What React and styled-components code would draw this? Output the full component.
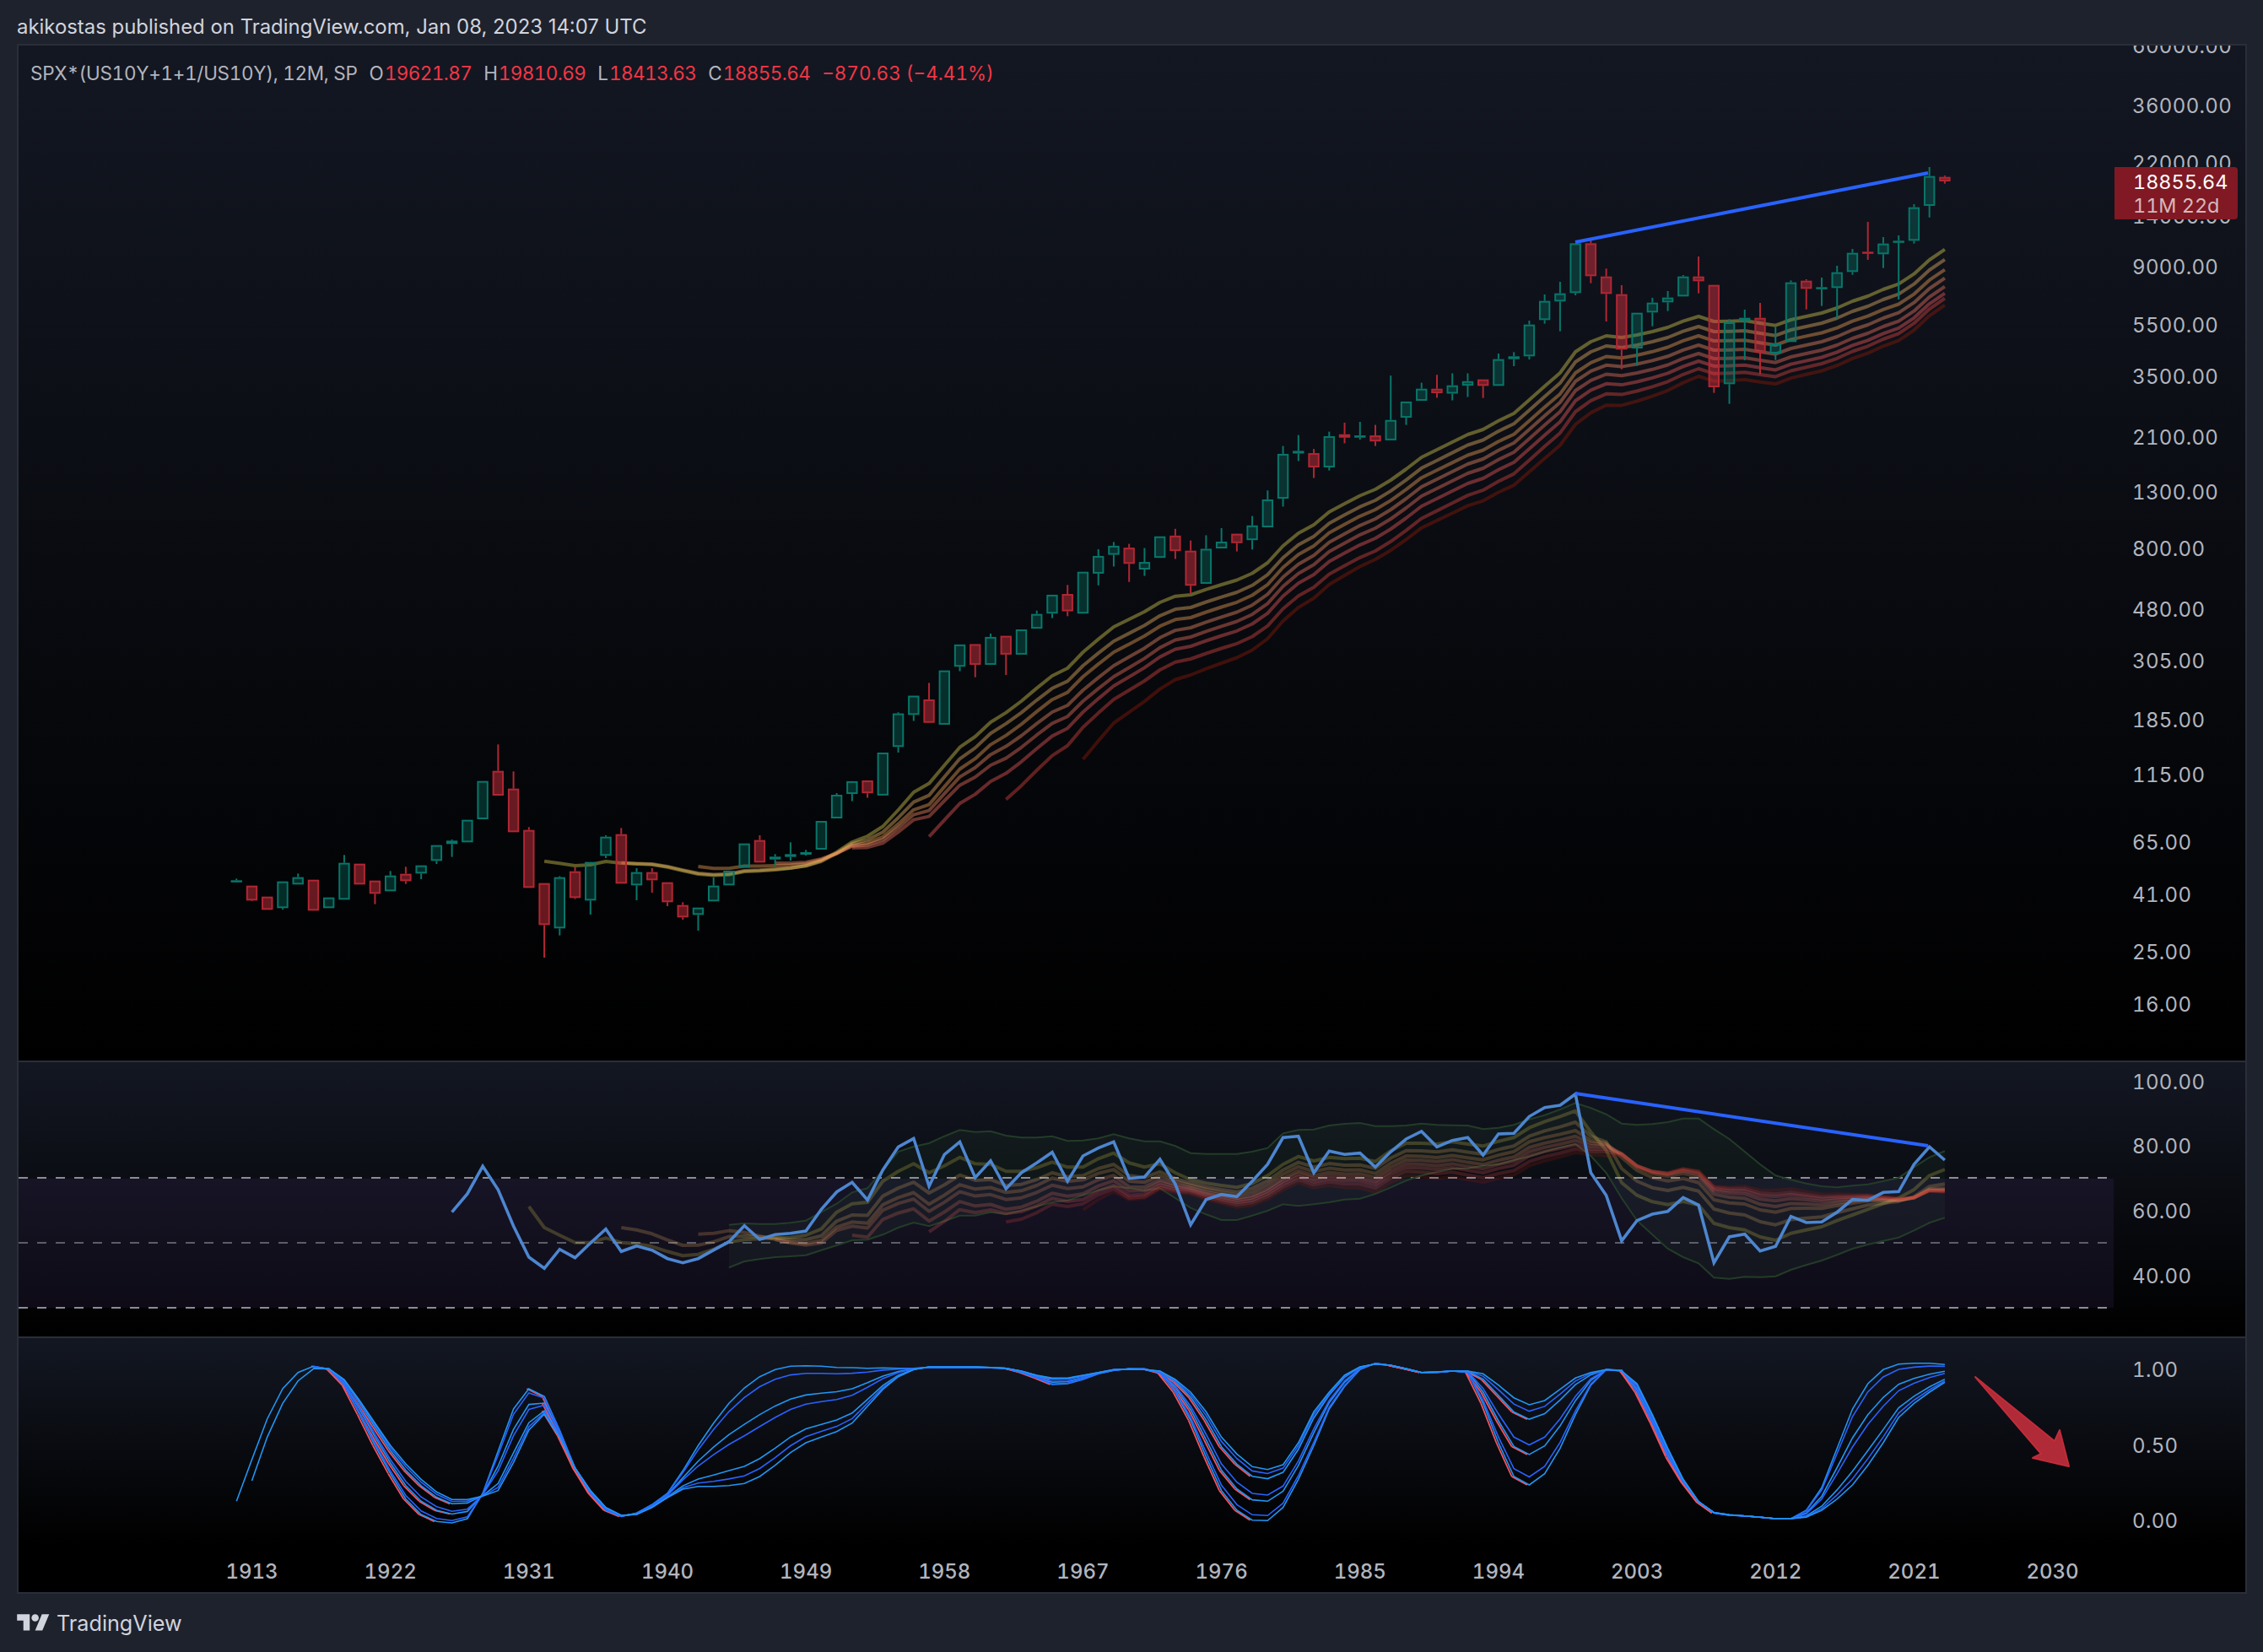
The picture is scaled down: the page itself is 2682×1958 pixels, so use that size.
import React from 'react';
import styled, { createGlobalStyle } from 'styled-components';

const GlobalStyle = createGlobalStyle`
  html, body {
    margin: 0;
    padding: 0;
    background: #1e222d;
  }
`;

const FONT = 'Inter, "Noto Sans", "Liberation Sans", sans-serif';

const Page = styled.div`
  display: flex;
  flex-direction: column;
  width: 2682px;
  height: 1958px;
  overflow: hidden;
  background: #1e222d;
  font-family: ${FONT};
`;

const Header = styled.div`
  display: flex;
  align-items: center;
  height: 42px;
  padding: 10px 0 0 20px;
  font-size: 23.9px;
  color: #d1d4dc;
`;

const Frame = styled.div`
  display: flex;
  flex-direction: column;
  gap: 2px;
  margin: 0 19px 0 20px;
  border: 2px solid #2a2e39;
  background: #2a2e39;
`;

const Pane = styled.div`
  position: relative;
  height: ${(p) => p.$height}px;
  overflow: hidden;
  background: linear-gradient(180deg, #131722 0%, #000 ${(p) => p.$fade || 100}%);
`;

const PaneSvg = styled.svg`
  display: block;
  width: 100%;
  height: 100%;
`;

const AxisLabel = styled.text`
  font-family: ${FONT};
  font-size: 24px;
  font-feature-settings: 'tnum';
  fill: #b2b5be;
  letter-spacing: 0.35px;
`;

const TimeLabel = styled(AxisLabel)`
  font-weight: 500;
  letter-spacing: 0;
  text-anchor: middle;
`;

const Legend = styled.div`
  position: absolute;
  left: 14px;
  top: 20px;
  display: flex;
  gap: 14px;
  font-size: 22.5px;
  font-feature-settings: 'tnum';
  line-height: 26px;
  color: #b2b5be;
  white-space: nowrap;
`;

const LegendTitle = styled.span`
  letter-spacing: -0.3px;
`;

const LegendPair = styled.span`
  display: inline-flex;
  gap: 1px;
`;

const LegendValue = styled.span`
  color: #f23645;
  letter-spacing: -0.6px;
`;

const LegendChange = styled.span`
  color: #f23645;
`;

const PriceBadge = styled.div`
  position: absolute;
  left: 2484px;
  top: 144px;
  display: flex;
  flex-direction: column;
  justify-content: center;
  box-sizing: border-box;
  width: 146px;
  height: 62px;
  padding: 2px 0 0 22px;
  border-radius: 0 4px 4px 0;
  background: #801923;
  font-size: 23.4px;
  font-feature-settings: 'tnum';
  line-height: 28px;
  color: #fff;
`;

const BadgeSub = styled.span`
  color: rgba(255, 255, 255, 0.7);
`;

const Footer = styled.div`
  display: flex;
  align-items: center;
  gap: 8px;
  height: 69px;
  padding-left: 20px;
  font-size: 25.2px;
  color: #d1d4dc;
`;

const LogoMark = styled.svg`
  display: block;
  width: 39px;
  height: 30px;
  fill: #d1d4dc;
`;

// horizontal position of a yearly bar, in page pixels
const xOf = (year) => 298.5 + 18.24 * (year - 1913);
const pts = (list) => list.map(([x, y]) => `${x.toFixed(1)},${y.toFixed(1)}`).join(' ');

// candles: colour, body top, body bottom, wick top, wick bottom
const crop = (rows, y0, k) =>
  rows.map(([c, a, b, t, w]) => [c, y0 + a / k, y0 + b / k, y0 + (t ?? a) / k, y0 + (w ?? b) / k]);

const candles = [
  ...crop(
    [
      ['g', 550, 556, 544, 556], ['r', 569, 622, 569, 624], ['r', 608, 655], ['g', 554, 649, 554, 654],
      ['g', 539, 565, 526], ['r', 548, 658], ['g', 611, 649], ['g', 488, 619, 460], ['r', 491, 565],
      ['r', 551, 598, 551, 635], ['g', 533, 589, 517], ['r', 527, 553, 502, 563], ['g', 497, 526, 497, 546],
      ['g', 425, 481, 425, 492], ['g', 409, 421, 405, 467], ['g', 335, 415], ['g', 197, 333],
      ['r', 161, 249, 67], ['r', 224, 379, 163], ['r', 371, 577, 361], ['r', 560, 709, 560, 825],
      ['g', 539, 721, 535, 746], ['r', 518, 613, 503, 617], ['g', 485, 622, 485, 672], ['g', 395, 463, 390, 471],
      ['r', 386, 562, 364], ['g', 521, 568, 507, 621], ['r', 521, 550, 507, 594], ['r', 557, 628, 557, 642],
      ['r', 638, 682, 628, 690], ['g', 647, 673, 647, 729], ['g', 569, 625, 540], ['g', 516, 568],
      ['g', 419, 505], ['r', 407, 487, 390], ['g', 466, 476, 457, 500], ['g', 457, 467, 415, 480],
      ['g', 450, 459, 442, 462], ['g', 339, 441], ['g', 246, 330, 240],
    ],
    860,
    3
  ),
  ...crop(
    [
      ['g', 1402, 1436, 1402, 1455], ['r', 1400, 1434, 1400, 1446], ['g', 1326, 1440], ['g', 1222, 1311, 1219, 1326],
      ['g', 1175, 1226, 1175, 1242], ['r', 1185, 1247, 1141], ['g', 1108, 1252], ['g', 1039, 1098, 1039, 1110],
      ['r', 1038, 1093, 1038, 1126], ['g', 1019, 1093, 1010], ['r', 1016, 1066, 1016, 1120], ['g', 999, 1066],
      ['g', 958, 997, 949], ['g', 907, 957, 907, 969], ['r', 905, 951, 881, 964], ['g', 846, 957],
      ['g', 804, 851, 786, 882], ['g', 777, 801, 767, 832], ['r', 782, 825, 772, 873], ['g', 820, 840, 783, 857],
      ['g', 752, 809], ['r', 750, 791, 732, 812], ['r', 790, 883, 763, 905], ['g', 785, 878, 749],
      ['g', 766, 784, 730], ['r', 745, 770, 745, 792], ['g', 723, 762, 698, 787], ['g', 654, 728, 630],
      ['g', 533, 652, 512, 673], ['g', 525, 532, 483, 552], ['r', 531, 569, 520, 597], ['g', 486, 569, 474, 577],
      ['r', 481, 490, 450, 505], ['g', 484, 490, 448, 495], ['r', 484, 500, 456, 512], ['g', 443, 497, 325],
      ['g', 394, 437, 394, 456], ['g', 360, 392, 344], ['r', 360, 372, 323, 384], ['g', 351, 373, 319, 391],
      ['g', 340, 352, 319, 382],
    ],
    300,
    2.24
  ),
  ...crop(
    [
      ['r', 809, 832, 809, 875], ['g', 737, 832, 717], ['g', 727, 737, 712, 762], ['g', 614, 727, 600, 738],
      ['g', 530, 598, 507, 611], ['g', 503, 532, 462, 638], ['g', 325, 502, 325, 510], ['r', 325, 442, 307, 467],
      ['r', 443, 505, 415, 603], ['r', 506, 703, 474, 773], ['g', 572, 699, 572, 760], ['g', 536, 571, 519, 620],
      ['g', 518, 535, 495, 566], ['g', 443, 514, 438], ['r', 443, 460, 372, 503], ['r', 473, 837, 473, 857],
      ['g', 606, 826, 595, 896], ['g', 590, 601, 561, 741], ['r', 590, 714, 537, 791], ['g', 681, 717, 623, 740],
      ['g', 464, 676, 457], ['r', 458, 487, 453, 560], ['g', 481, 488, 447, 548], ['g', 428, 484, 405, 593],
      ['g', 359, 427, 345, 437], ['r', 355, 362, 249, 384], ['g', 326, 364, 303, 413], ['g', 316, 323, 297, 525],
      ['g', 197, 316, 186, 326], ['g', 86, 192, 54, 233], ['r', 89, 105, 84, 113],
    ],
    180,
    3
  ),
];

const RIBBON = ['231,218,84', '251,191,104', '255,169,91', '255,147,104', '255,120,100', '255,96,96', '233,73,67', '149,27,7'];

// offset of every ribbon line from the first one, at some years
const offsetAt = (keys, year, i) => {
  const years = Object.keys(keys).map(Number);
  let from = years[0];
  let to = years[years.length - 1];
  years.forEach((y) => {
    if (y <= year) from = y;
  });
  for (let n = years.length - 1; n >= 0; n -= 1) {
    if (years[n] >= year) to = years[n];
  }
  if (from === to) return keys[from][i];
  const t = (year - from) / (to - from);
  return keys[from][i] + (keys[to][i] - keys[from][i]) * t;
};

const ribbonLines = (firstYear, line, keys, starts, toPx) =>
  starts.map((start, i) =>
    line
      .map((y, n) => [firstYear + n, y])
      .filter(([year]) => year >= start)
      .map(([year, y]) => [xOf(year), toPx(y + offsetAt(keys, year, i))])
  );

const PRICE_TOP = [
  1020.7, 1023.3, 1026, 1025, 1021, 1023, 1024, 1024.7, 1027.7, 1032, 1036, 1037.5, 1036.7, 1033, 1032.3, 1031, 1029, 1026,
  1020, 1010, 998, 991, 979.5, 960, 939, 928.6, 907, 885.7, 873, 856, 844.6, 831, 815.6, 801, 792, 773, 757.6, 743, 734, 725,
  714, 706.7, 705, 698.7, 693, 687.5, 679.5, 667, 647, 632, 622, 606.7, 597, 587.5, 580, 569, 556, 542, 533, 524, 515, 509,
  498.7, 490, 474, 457.7, 442, 417, 405, 398, 400, 397, 393, 388, 380.7, 375, 381, 380.7, 380, 383, 385.7, 379, 375, 371, 365,
  357, 351, 343, 336.7, 324.7, 308, 295.7,
];

const PRICE_KEYS = {
  1932: [0, 0, 0, 0, 0, 0, 0, 0],
  1942: [0, -1, -9, -9, -9, -9, -9, -9],
  1947: [0, -1, -5, -8, -8, -8, -8, -8],
  1950: [0, 1, -1, -2, 0, 0, 0, 0],
  1952: [0, 2, 4, 5, 7, 30, 60, 80],
  1957: [0, 14, 25, 32, 39, 63, 85, 100],
  1962: [0, 13, 27, 40, 54, 72, 103, 115],
  1967: [0, 16, 29, 45, 58, 71, 89, 127],
  1969: [0, 17, 30, 46, 59, 70, 86, 114],
  1974: [0, 15, 27, 39, 50, 61, 76, 95],
  1986: [0, 13, 24, 35, 46, 58, 73, 83],
  1999: [0, 12, 25, 35, 46, 58, 71, 86],
  2007: [0, 12, 23, 34, 44, 53, 62, 71],
  2023: [0, 12, 24, 34, 44, 52, 58, 66],
};

const PRICE_STARTS = [1932, 1937, 1942, 1947, 1952, 1957, 1962, 1967];

const PRICE_LABELS = [
  ['60000.00', 54], ['36000.00', 125], ['22000.00', 193], ['14000.00', 256], ['9000.00', 316], ['5500.00', 385],
  ['3500.00', 446], ['2100.00', 518], ['1300.00', 583], ['800.00', 650], ['480.00', 722], ['305.00', 783],
  ['185.00', 853], ['115.00', 918], ['65.00', 998], ['41.00', 1060], ['25.00', 1128], ['16.00', 1190],
];

const rsiY = (v) => 1240 + v / 3;

const RSI_LINE = [
  590, 525, 427, 510, 640, 750, 790, 722, 752, 700, 650, 730, 710, 725, 755, 770, 755, 725, 695, 638, 687, 670, 665, 657, 580,
  518, 484, 547, 440, 358, 328, 498, 385, 340, 467, 407, 507, 450, 415, 377, 480, 390, 362, 340, 470, 465, 402, 490, 635, 545,
  527, 535, 480, 420, 325, 320, 450, 373, 385, 380, 430, 375, 330, 303, 358, 335, 325, 387, 312, 310, 250, 218, 210, 170, 450,
  530, 692, 620, 597, 587, 538, 565, 770, 678, 668, 728, 712, 605, 627, 625, 590, 545, 548, 520, 517, 420, 358, 405,
];

const RSI_TOP = [
  570, 645, 672, 698, 698, 682, 698, 702, 712, 730, 745, 740, 722, 697, 688, 685, 682, 680, 672, 650, 590, 560, 555, 480, 445,
  418, 450, 425, 395, 418, 420, 445, 445, 432, 412, 430, 430, 400, 380, 415, 430, 418, 450, 475, 487, 495, 502, 488, 460, 420,
  392, 408, 395, 400, 398, 410, 372, 345, 345, 348, 340, 348, 355, 338, 325, 290, 268, 250, 230, 305, 370, 485, 530, 553, 563,
  552, 565, 630, 645, 653, 678, 690, 665, 653, 642, 620, 600, 580, 560, 540, 510, 460, 438,
];

const RSI_KEYS = {
  1931: [0, 0, 0, 0, 0, 0, 0, 0],
  1937: [0, -53, -53, -53, -53, -53, -53, -53],
  1942: [0, -33, -72, -72, -72, -72, -72, -72],
  1947: [0, 0, 5, 5, 5, 5, 5, 5],
  1952: [0, 40, 65, 80, 112, 112, 112, 112],
  1957: [0, 72, 112, 137, 172, 210, 210, 210],
  1962: [0, 50, 75, 100, 135, 150, 180, 180],
  1967: [0, 30, 45, 70, 95, 115, 130, 152],
  1970: [0, 45, 65, 85, 100, 115, 125, 130],
  1974: [0, 12, 20, 28, 33, 38, 44, 50],
  1980: [0, 20, 35, 50, 60, 70, 80, 90],
  1990: [0, 28, 48, 62, 77, 90, 105, 122],
  1996: [0, 30, 50, 70, 85, 100, 120, 135],
  1999: [0, 40, 70, 90, 105, 120, 135, 148],
  2000: [0, 15, 30, 40, 50, 60, 70, 80],
  2001: [0, -30, -25, -20, -15, -5, 5, 20],
  2002: [0, -50, -90, -100, -103, -103, -100, -95],
  2007: [0, -50, -80, -100, -110, -115, -120, -120],
  2012: [0, -55, -100, -120, -140, -155, -165, -178],
  2018: [0, -15, -30, -35, -40, -45, -48, -52],
  2023: [0, 52, 67, 72, 75, 77, 79, 82],
};

const RSI_STARTS = [1931, 1937, 1942, 1947, 1952, 1957, 1962, 1967];

const BAND_UPPER = [
  635, 630, 632, 632, 628, 620, 590, 560, 520, 505, 440, 375, 357, 345, 320, 298, 305, 302, 318, 325, 325, 320, 337, 335, 328,
  313, 328, 338, 338, 355, 380, 383, 383, 383, 375, 362, 310, 298, 296, 282, 276, 273, 284, 284, 282, 275, 280, 281, 282, 295,
  290, 280, 260, 245, 225, 202, 220, 242, 275, 280, 277, 270, 257, 257, 295, 330, 375, 420, 460, 475, 488, 498, 502, 496, 491,
  480, 468, 430, 395, 373,
];

const BAND_LOWER = [
  787, 765, 757, 750, 747, 743, 725, 708, 690, 688, 670, 645, 627, 640, 622, 602, 602, 590, 597, 585, 570, 555, 548, 530, 512,
  498, 505, 513, 505, 540, 575, 598, 618, 618, 602, 585, 562, 568, 562, 555, 545, 542, 525, 502, 478, 460, 447, 436, 434, 425,
  420, 405, 392, 375, 360, 348, 390, 450, 540, 620, 670, 720, 750, 772, 823, 827, 820, 821, 818, 795, 778, 762, 742, 720, 705,
  692, 680, 655, 628, 610,
];

const STOCH_FAST = [
  628, 480, 335, 228, 170, 148, 158, 215, 320, 430, 530, 620, 675, 700, 705, 690, 600, 450, 300, 228, 255, 375, 510, 600, 660,
  682, 670, 640, 600, 520, 430, 350, 280, 225, 185, 160, 148, 146, 148, 152, 153, 155, 154, 155, 155, 153, 153, 153, 153, 154,
  155, 170, 190, 213, 210, 195, 175, 163, 157, 157, 172, 240, 340, 470, 590, 660, 695, 697, 650, 550, 430, 300, 220, 160, 137,
  145, 157, 170, 170, 165, 170, 280, 420, 540, 570, 530, 440, 320, 215, 160, 162, 240, 350, 470, 560, 630, 670, 678, 680, 685,
  690, 690, 660, 580, 440, 300, 210, 160, 140, 137, 137, 142,
];

const STOCH_SLOW = [
  628, 555, 400, 280, 200, 157, 157, 195, 270, 350, 430, 495, 550, 595, 622, 622, 610, 590, 490, 375, 318, 400, 510, 590, 650,
  678, 675, 650, 615, 585, 575, 575, 572, 565, 540, 500, 455, 420, 400, 380, 350, 290, 230, 185, 160, 150, 150, 150, 150, 152,
  155, 165, 180, 190, 190, 180, 170, 160, 158, 160, 165, 195, 240, 310, 400, 460, 505, 515, 498, 420, 310, 240, 180, 150, 140,
  145, 157, 170, 168, 165, 165, 175, 215, 260, 285, 270, 230, 190, 170, 160, 165, 210, 320, 440, 550, 630, 668, 676, 680, 685,
  690, 690, 685, 660, 620, 570, 500, 420, 330, 280, 240, 205,
];

const STOCH_MIX = [0, 0.1, 0.38, 0.5, 0.82, 0.92, 1];
const stochY = (v) => 1570 + v / 3;

// only the fastest and slowest line reach back to the first bars
const stochStart = (mix) => {
  if (mix === 0) return 0;
  return mix === 1 ? 1 : 5;
};

const stochLine = (mix) =>
  STOCH_FAST.map((f, n) => [xOf(1912 + n), stochY(f + (STOCH_SLOW[n] - f) * mix)]).slice(stochStart(mix));

const fallingParts = (line) =>
  line.slice(1).map((p, n) => [line[n], p]).filter(([a, b]) => b[1] - a[1] > 3);

const YEARS = [1913, 1922, 1931, 1940, 1949, 1958, 1967, 1976, 1985, 1994, 2003, 2012, 2021, 2030];

const AXIS_X = 2527;

const Candle = ({ year, data }) => {
  const [c, top, bottom, wickTop, wickBottom] = data;
  const x = xOf(year);
  const stroke = c === 'g' ? '#08766a' : '#b02733';
  const fill = c === 'g' ? 'rgba(8,153,129,0.27)' : 'rgba(242,54,69,0.42)';
  return (
    <g>
      <line x1={x} x2={x} y1={wickTop} y2={top} stroke={stroke} strokeWidth="2" />
      <line x1={x} x2={x} y1={bottom} y2={wickBottom} stroke={stroke} strokeWidth="2" />
      <rect x={x - 5.7} y={top + 1} width="11.4" height={Math.max(bottom - top - 2, 0.5)} fill={fill} stroke={stroke} strokeWidth="2" />
    </g>
  );
};

const Ribbon = ({ lines, alpha }) =>
  lines.map((line, i) => (
    <polyline key={RIBBON[i]} points={pts(line)} fill="none" stroke={`rgba(${RIBBON[i]},${alpha})`} strokeWidth="4" strokeLinejoin="round" />
  ));

const PricePane = () => {
  const lines = ribbonLines(1932, PRICE_TOP, PRICE_KEYS, PRICE_STARTS, (y) => y);
  return (
    <Pane $height={1203}>
      <PaneSvg viewBox="22 54 2639 1203">
        <Ribbon lines={lines} alpha={0.4} />
        {candles.map((c, i) => (
          <Candle key={1912 + i} year={1912 + i} data={c} />
        ))}
        <line x1="1867" y1="287" x2="2285" y2="205" stroke="#2962ff" strokeWidth="4" />
        {PRICE_LABELS.map(([label, y]) => (
          <AxisLabel key={label} x={AXIS_X} y={y + 8.7}>
            {label}
          </AxisLabel>
        ))}
      </PaneSvg>
      <Legend>
        <LegendTitle>SPX*(US10Y+1+1/US10Y), 12M, SP</LegendTitle>
        <LegendPair>O<LegendValue>19621.87</LegendValue></LegendPair>
        <LegendPair>H<LegendValue>19810.69</LegendValue></LegendPair>
        <LegendPair>L<LegendValue>18413.63</LegendValue></LegendPair>
        <LegendPair>C<LegendValue>18855.64</LegendValue></LegendPair>
        <LegendChange>−870.63 (−4.41%)</LegendChange>
      </Legend>
      <PriceBadge>
        <span>18855.64</span>
        <BadgeSub>11M 22d</BadgeSub>
      </PriceBadge>
    </Pane>
  );
};

const RsiPane = () => {
  const lines = ribbonLines(1931, RSI_TOP, RSI_KEYS, RSI_STARTS, rsiY);
  const upper = BAND_UPPER.map((v, n) => [xOf(1944 + n), rsiY(v)]);
  const lower = BAND_LOWER.map((v, n) => [xOf(1944 + n), rsiY(v)]);
  const rsi = RSI_LINE.map((v, n) => [xOf(1926 + n), rsiY(v)]);
  return (
    <Pane $height={325}>
      <PaneSvg viewBox="22 1259 2639 325">
        <rect x="22" y="1397" width="2483" height="153" fill="rgba(126,87,194,0.1)" />
        <polygon points={pts([...upper, ...[...lower].reverse()])} fill="rgba(90,190,110,0.05)" />
        <line x1="22" x2="2505" y1="1396" y2="1396" stroke="#8b8c96" strokeWidth="2" strokeDasharray="11 11" />
        <line x1="22" x2="2505" y1="1473" y2="1473" stroke="#5c5d6b" strokeWidth="2" strokeDasharray="11 11" />
        <line x1="22" x2="2505" y1="1550" y2="1550" stroke="#8b8c96" strokeWidth="2" strokeDasharray="11 11" />
        <polyline points={pts(upper)} fill="none" stroke="#233c28" strokeWidth="2" />
        <polyline points={pts(lower)} fill="none" stroke="#233c28" strokeWidth="2" />
        <Ribbon lines={lines} alpha={0.22} />
        <polyline points={pts(rsi)} fill="none" stroke="#4d86d0" strokeWidth="3.6" strokeLinejoin="miter" />
        <line x1="1867" y1="1296" x2="2285" y2="1358" stroke="#2962ff" strokeWidth="4" />
        <AxisLabel x={AXIS_X} y={1290.7}>100.00</AxisLabel>
        <AxisLabel x={AXIS_X} y={1366.7}>80.00</AxisLabel>
        <AxisLabel x={AXIS_X} y={1443.7}>60.00</AxisLabel>
        <AxisLabel x={AXIS_X} y={1520.7}>40.00</AxisLabel>
      </PaneSvg>
    </Pane>
  );
};

const StochPane = () => {
  const lines = STOCH_MIX.map(stochLine);
  return (
    <Pane $height={301} $fade={82}>
      <PaneSvg viewBox="22 1586 2639 301">
        {lines.filter((_, i) => i % 2 === 0 && i < 6).map((line, i) =>
          fallingParts(line).map(([a, b]) => (
            <line key={`${i}-${a[0]}`} x1={a[0] - 2.5} y1={a[1]} x2={b[0] - 2.5} y2={b[1]} stroke="#f7525f" strokeWidth="1.8" />
          ))
        )}
        {lines.map((line, i) => (
          <polyline key={STOCH_MIX[i]} points={pts(line)} fill="none" stroke={i % 2 ? '#2962ff' : '#2196f3'} strokeWidth="1.6" />
        ))}
        <polygon
          points="2341,1632 2435,1708 2441,1695 2452,1738 2409,1728 2419,1723"
          fill="#b02a37"
          stroke="#c22c3a"
          strokeWidth="2"
          strokeLinejoin="round"
        />
        <AxisLabel x={AXIS_X} y={1631.7}>1.00</AxisLabel>
        <AxisLabel x={AXIS_X} y={1721.7}>0.50</AxisLabel>
        <AxisLabel x={AXIS_X} y={1810.7}>0.00</AxisLabel>
        {YEARS.map((year) => (
          <TimeLabel key={year} x={xOf(year)} y={1870.7}>
            {year}
          </TimeLabel>
        ))}
      </PaneSvg>
    </Pane>
  );
};

const App = () => (
  <Page>
    <GlobalStyle />
    <Header>akikostas published on TradingView.com, Jan 08, 2023 14:07 UTC</Header>
    <Frame>
      <PricePane />
      <RsiPane />
      <StochPane />
    </Frame>
    <Footer>
      <LogoMark viewBox="0 0 36 28">
        <path d="M14 22H7V11H0V4h14v18zM28 22h-8l7.5-18h8L28 22z" />
        <circle cx="20" cy="8" r="4" />
      </LogoMark>
      TradingView
    </Footer>
  </Page>
);

export default App;
